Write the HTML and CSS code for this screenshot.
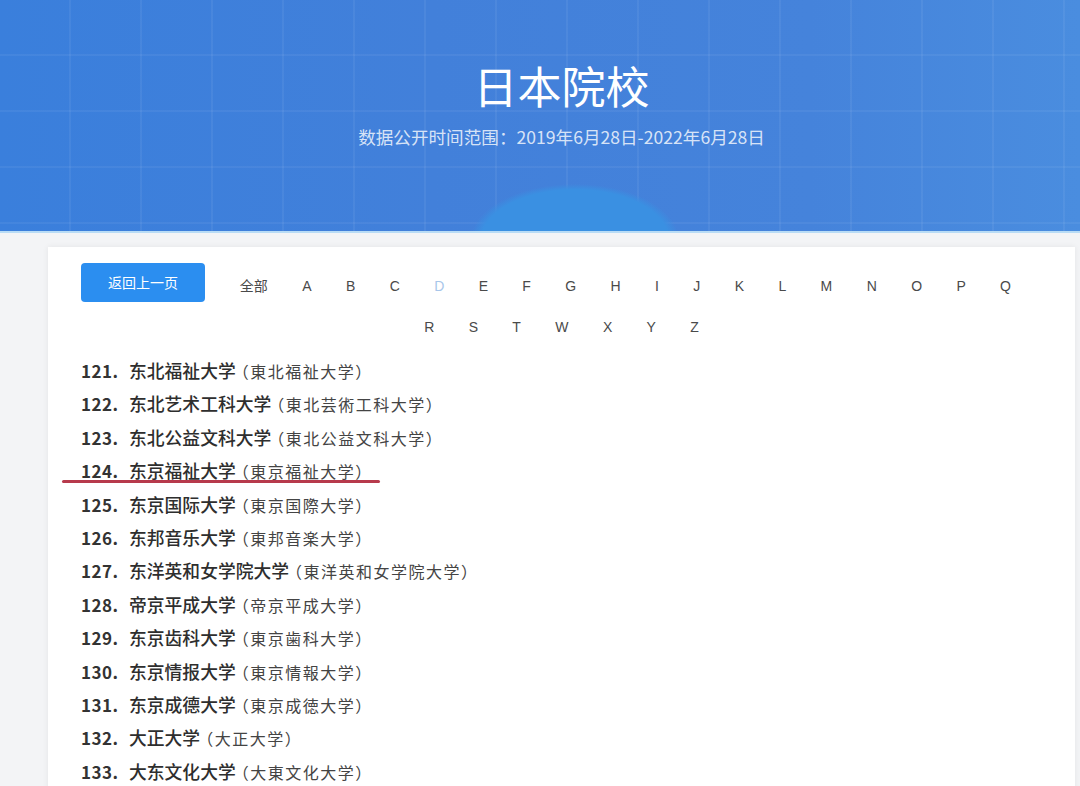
FILE: index.html
```html
<!DOCTYPE html>
<html lang="zh-CN">
<head>
<meta charset="utf-8">
<title>日本院校</title>
<link rel="stylesheet" href="styles.css">
</head>
<body>
<header class="hero">
  <div class="hero-inner">
    <h1 class="hero-title">日本院校</h1>
    <p class="hero-sub">数据公开时间范围：2019年6月28日-2022年6月28日</p>
  </div>
</header>
<main class="card">
  <nav class="nav">
    <a class="back-btn">返回上一页</a>
    <div class="letters">
      <span class="letter">全部</span><span class="letter">A</span><span class="letter">B</span><span class="letter">C</span><span class="letter active">D</span><span class="letter">E</span><span class="letter">F</span><span class="letter">G</span><span class="letter">H</span><span class="letter">I</span><span class="letter">J</span><span class="letter">K</span><span class="letter">L</span><span class="letter">M</span><span class="letter">N</span><span class="letter">O</span><span class="letter">P</span><span class="letter">Q</span><span class="letter">R</span><span class="letter">S</span><span class="letter">T</span><span class="letter">W</span><span class="letter">X</span><span class="letter">Y</span><span class="letter">Z</span>
    </div>
  </nav>
  <ol class="list">
    <li class="row"><span class="num">121.</span><span class="name">东北福祉大学</span><span class="orig">（東北福祉大学）</span></li>
    <li class="row"><span class="num">122.</span><span class="name">东北艺术工科大学</span><span class="orig">（東北芸術工科大学）</span></li>
    <li class="row"><span class="num">123.</span><span class="name">东北公益文科大学</span><span class="orig">（東北公益文科大学）</span></li>
    <li class="row marked"><span class="num">124.</span><span class="name">东京福祉大学</span><span class="orig">（東京福祉大学）</span></li>
    <li class="row"><span class="num">125.</span><span class="name">东京国际大学</span><span class="orig">（東京国際大学）</span></li>
    <li class="row"><span class="num">126.</span><span class="name">东邦音乐大学</span><span class="orig">（東邦音楽大学）</span></li>
    <li class="row"><span class="num">127.</span><span class="name">东洋英和女学院大学</span><span class="orig">（東洋英和女学院大学）</span></li>
    <li class="row"><span class="num">128.</span><span class="name">帝京平成大学</span><span class="orig">（帝京平成大学）</span></li>
    <li class="row"><span class="num">129.</span><span class="name">东京齿科大学</span><span class="orig">（東京歯科大学）</span></li>
    <li class="row"><span class="num">130.</span><span class="name">东京情报大学</span><span class="orig">（東京情報大学）</span></li>
    <li class="row"><span class="num">131.</span><span class="name">东京成德大学</span><span class="orig">（東京成徳大学）</span></li>
    <li class="row"><span class="num">132.</span><span class="name">大正大学</span><span class="orig">（大正大学）</span></li>
    <li class="row"><span class="num">133.</span><span class="name">大东文化大学</span><span class="orig">（大東文化大学）</span></li>
  </ol>
</main>
</body>
</html>
```
FILE: styles.css
```css
html, body {
  margin: 0;
  padding: 0;
}
body {
  background: #f3f4f6;
  font-family: "Noto Sans CJK SC", "Noto Sans", sans-serif;
  color: #333;
  overflow: hidden;
  height: 786px;
}

.hero {
  height: 231px;
  border-bottom: 2px solid #b9dcf5;
  background:
    radial-gradient(ellipse 104px 56px at 575px 240px, #3a90e2 0, #3a90e2 90%, rgba(58,144,226,0) 100%),
    repeating-linear-gradient(90deg, rgba(255,255,255,0) 0, rgba(255,255,255,0) 69px, rgba(255,255,255,0.055) 69px, rgba(255,255,255,0.055) 71px),
    repeating-linear-gradient(180deg, rgba(255,255,255,0) 0, rgba(255,255,255,0) 54px, rgba(255,255,255,0.05) 54px, rgba(255,255,255,0.05) 56px),
    linear-gradient(90deg, #3a7fdc 0%, #4280da 40%, #4583db 75%, #4a8ddf 100%);
  padding-left: 48px;
}
.hero-inner {
  width: 1027px;
  text-align: center;
  padding-top: 54px;
}
.hero-title {
  margin: 0;
  font-size: 44px;
  font-weight: 400;
  line-height: 62px;
  color: #fff;
}
.hero-sub {
  margin: 9px 0 0;
  font-size: 17.6px;
  line-height: 24px;
  color: rgba(255,255,255,0.8);
}

.card {
  display: block;
  margin: 14px 0 0 48px;
  width: 1027px;
  box-sizing: border-box;
  background: #fff;
  box-shadow: 0 0 6px rgba(0,0,0,0.07);
  padding: 16px 33px 0;
  height: 560px;
}

.nav::after {
  content: "";
  display: block;
  clear: both;
}
.back-btn {
  float: left;
  width: 124px;
  height: 39px;
  line-height: 39px;
  text-align: center;
  background: #2b8ef0;
  color: #fff;
  font-size: 14px;
  border-radius: 4px;
}
.letters {
  padding-top: 3px;
  text-align: center;
  line-height: 41px;
  font-family: "Liberation Sans", Arial, "Noto Sans CJK SC", sans-serif;
  font-size: 14px;
  color: #4a4a4a;
}
.letter {
  display: inline-block;
  padding: 0 17.2px;
}
.letter:first-child {
  padding-left: 21px;
}
.letter.active {
  color: #a8c6ea;
}

.list {
  list-style: none;
  margin: 6px 0 0;
  padding: 0;
}
.row {
  position: relative;
  height: 33.4px;
  line-height: 33.4px;
  white-space: nowrap;
}
.num {
  display: inline-block;
  width: 48px;
  font-size: 17px;
  font-weight: 700;
  color: #333;
  letter-spacing: 0.5px;
}
.name {
  font-size: 17.8px;
  font-weight: 500;
  color: #2e2e2e;
}
.orig {
  font-size: 16px;
  letter-spacing: 1.5px;
  color: #444;
  margin-left: -3px;
}
.row.marked::after {
  content: "";
  position: absolute;
  left: -19px;
  top: 26px;
  width: 318px;
  height: 2.5px;
  background: #b73a4c;
  border-radius: 2px;
}
```
